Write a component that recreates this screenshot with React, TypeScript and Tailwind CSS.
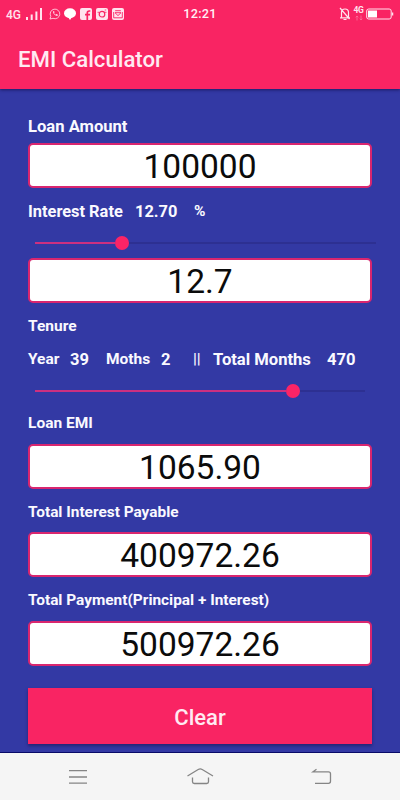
import type { ReactNode } from "react";

function Label({ children, className }: { children: ReactNode; className: string }) {
  return <div className={`flex items-center whitespace-pre font-bold text-[#faf9ff] ${className}`}>{children}</div>;
}

function Field({ value }: { value: string }) {
  return (
    <div className="flex h-[45px] shrink-0 items-center justify-center rounded-[5px] border-2 border-[#d9266f] bg-white pt-[2px] text-[33.5px] leading-none text-[#0b0b0b]">
      {value}
    </div>
  );
}

function Slider({ value, className }: { value: number; className: string }) {
  return (
    <div className={`ml-[7px] flex h-4 shrink-0 items-center ${className}`}>
      <div className="h-[2px] bg-[#cc3080]" style={{ width: value - 7 }} />
      <div className="size-[14px] shrink-0 rounded-full bg-[#fb2466]" />
      <div className="h-[2px] flex-1 bg-[#2d3092]" />
    </div>
  );
}

function StatusBar() {
  return (
    <div className="grid h-7 grid-cols-[1fr_auto_1fr] items-center text-[#ffe3ee]">
      <div className="flex items-center pl-[6px]">
        <span className="w-[20px] pt-[2px] text-[12px] font-medium leading-none">4G</span>
        <svg width="18" height="14" viewBox="0 0 18 14" fill="currentColor">
          <path d="M0 10h2v3H0zM4.7 7.5h2V13h-2zM9.4 4.5h2V13h-2zM14 1h2v12h-2z" />
        </svg>
        <svg className="ml-[5px]" width="12" height="12" viewBox="0 0 12 12" fill="none" stroke="currentColor">
          <path d="M1 11l.8-2.7A4.8 4.8 0 1 1 4 10.3Z" strokeWidth=".8" />
          <path d="M4 3.5c0 2.4 2 4.4 4.4 4.4l.5-1.2-1.5-.7-.7.7C5.8 6.3 5.3 5.6 5 5l.6-.7-.6-1.4Z" fill="currentColor" stroke="none" />
        </svg>
        <svg className="ml-[3px]" width="12" height="12" viewBox="0 0 12 12" fill="#fff">
          <ellipse cx="6" cy="5.3" rx="6" ry="5" /><path d="M4 9h4l-2 3Z" />
        </svg>
        <svg className="ml-[4px]" width="12" height="12" viewBox="0 0 12 12">
          <rect width="12" height="12" rx="2" fill="currentColor" />
          <path d="M7.3 12V5q0-2 2-2h1M5 6.7h5" stroke="#f92463" strokeWidth="1.7" fill="none" />
        </svg>
        <svg className="ml-[4px]" width="12" height="12" viewBox="0 0 12 12">
          <rect width="12" height="12" rx="2" fill="currentColor" />
          <path d="M1.5 4.3h2M8.5 4.3h2M8.7 2h1.5" stroke="#f92463" strokeWidth=".8" />
          <circle cx="6" cy="6.2" r="2.8" fill="none" stroke="#f92463" strokeWidth="1.2" />
        </svg>
        <svg className="ml-[4px]" width="12" height="12" viewBox="0 0 12 12">
          <rect width="12" height="12" rx="2" fill="currentColor" />
          <path d="M1.7 4v5.8h8.6V4M3.2 2.7h5.6M3 4.7h6L6 7.6Z" fill="none" stroke="#f92463" strokeWidth=".9" />
        </svg>
      </div>
      <span className="text-[12.7px] font-medium leading-none tracking-[.3px] text-[#fff0f6]">12:21</span>
      <div className="flex items-center justify-end pr-[6px]">
        <svg width="12" height="14" viewBox="0 0 12 14" fill="none" stroke="currentColor" strokeWidth="1.2">
          <path d="M2.5 10.5v-5Q2.5 2 6 2t3.5 3.5v5M1 10.8h10M4.5 12.5h3M1 1l9.5 11" />
        </svg>
        <div className="flex h-[18px] w-[15px] flex-col items-center">
          <span className="text-[8.5px] font-bold leading-[10px] tracking-[-.3px]">4G</span>
          <svg className="opacity-40" width="8" height="6" viewBox="0 0 8 6" fill="none" stroke="currentColor" strokeWidth=".8">
            <path d="M2 5.5V1M.7 2.3L2 1l1.3 1.3M6 .5V5M4.7 3.7L6 5l1.3-1.3" />
          </svg>
        </div>
        <svg width="28" height="12" viewBox="0 0 28 12" fill="none" stroke="currentColor">
          <rect x=".7" y="1" width="24.5" height="10" rx="2" /><path d="M26.5 4.5v3" strokeWidth="1.5" />
          <path d="M2 2.5h9v7H2z" fill="#fff" stroke="none" />
        </svg>
      </div>
    </div>
  );
}

export default function App() {
  return (
    <div className="flex h-[800px] w-[400px] flex-col overflow-hidden bg-[#3339a4] font-[Roboto,sans-serif]">
      <header className="h-[89px] shrink-0 bg-[#f92463] shadow-[0_1px_3px_rgba(15,10,65,.65)]">
        <StatusBar />
        <h1 className="flex h-[61px] items-center pl-[18px] pt-[2px] text-[22.2px] font-medium leading-none text-[#ffeaf2]">EMI Calculator</h1>
      </header>
      <main className="flex h-[663px] shrink-0 flex-col px-7">
        <Label className="mt-[27px] h-[22px] pt-px text-[16.6px]">Loan Amount</Label>
        <div className="h-[5px]" />
        <Field value="100000" />
        <Label className="mt-[12px] h-[22px] pt-[2px] text-[16.4px]">
          <span className="w-[107px]">Interest Rate</span><span className="w-[59px]">12.70</span><span className="text-[15.5px]">%</span>
        </Label>
        <Slider value={87} className="-mr-[4px] mt-[13px]" />
        <div className="h-[7px]" />
        <Field value="12.7" />
        <Label className="mt-[12px] h-[22px] pt-[2px] text-[15.5px]">Tenure</Label>
        <Label className="mt-[11px] h-[22px] pt-[2px] text-[15.5px]">
          <span className="w-[42px]">Year</span><span className="w-[36px] text-[16.5px]">39</span>
          <span className="w-[55px]">Moths</span><span className="w-[32px] text-[16.5px]">2</span>
          <span className="w-[20px] font-medium">||</span>
          <span className="w-[114px] text-[16.6px]">Total Months</span><span className="text-[16.6px]">470</span>
        </Label>
        <Slider value={258} className="mr-[7px] mt-[13px]" />
        <Label className="mt-[14px] h-[22px] text-[15.5px]">Loan EMI</Label>
        <div className="h-[9px]" />
        <Field value="1065.90" />
        <Label className="mt-[12px] h-[22px] pt-[2px] text-[15.4px]">Total Interest Payable</Label>
        <div className="h-[9px]" />
        <Field value="400972.26" />
        <Label className="mt-[12px] h-[22px] pt-[2px] text-[15.4px]">Total Payment(Principal + Interest)</Label>
        <div className="h-[10px]" />
        <Field value="500972.26" />
        <button className="mt-[22px] flex h-[56px] shrink-0 items-center justify-center bg-[#f92463] pt-[3px] text-[22px] font-medium leading-none text-[#ffeaf2] shadow-[0_2px_3px_rgba(20,15,70,.5)]">Clear</button>
      </main>
      <nav className="flex h-12 shrink-0 border-t border-[#080b68] bg-[#f5f5f5]">
        <svg width="400" height="47" viewBox="0 753 400 47" fill="none" stroke="#858585" strokeWidth="1.3">
          <path d="M69 770.7h18M69 777h18M69 783.2h18" />
          <path d="M187.5 776l10.7-6.5q2-1.2 4 0l10.8 6.5M192.5 777.5v4.2q0 1.8 1.8 1.8h12.4q1.8 0 1.8-1.8v-4.2" />
          <path d="M316.5 769.3l-3.5 2.5h15.5q2 0 2 2v7.5q0 2-2 2h-13.5" />
        </svg>
      </nav>
    </div>
  );
}
